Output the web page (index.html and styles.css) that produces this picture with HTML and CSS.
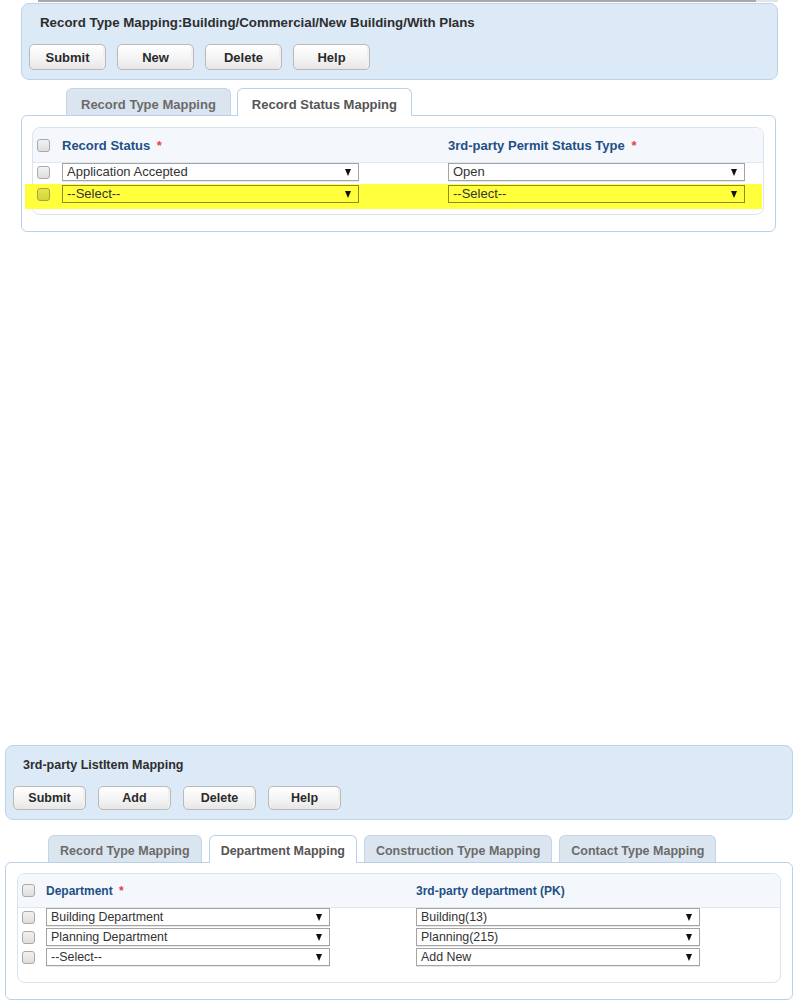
FILE: index.html
```html
<!doctype html>
<html lang="en">
  <head>
    <meta charset="UTF-8" />
    <title>Record Type Mapping</title>
    <link rel="stylesheet" href="styles.css">
  </head>
  <body>
    <!-- Record status mapping -->
    <section class="shot shot-top">
      <div class="rule"></div>
      <div class="toolbar">
        <div class="toolbar-title">Record Type Mapping:Building/Commercial/New Building/With Plans</div>
        <div class="toolbar-buttons">
          <button class="btn">Submit</button>
          <button class="btn">New</button>
          <button class="btn">Delete</button>
          <button class="btn">Help</button>
        </div>
      </div>

      <div class="tabs">
        <span class="tab">Record Type Mapping</span>
        <span class="tab active">Record Status Mapping</span>
      </div>
      <div class="tab-body">
        <div class="grid-table">
          <div class="grid-head">
            <span class="check"></span>
            <span class="col-title">Record Status <em>*</em></span>
            <span class="col-title">3rd-party Permit Status Type <em>*</em></span>
          </div>
          <div class="grid-row">
            <span class="check"></span>
            <div class="select">Application Accepted</div>
            <div class="select">Open</div>
          </div>
          <div class="grid-row highlight">
            <span class="check"></span>
            <div class="select">--Select--</div>
            <div class="select">--Select--</div>
          </div>
        </div>
      </div>
    </section>

    <!-- ListItem mapping -->
    <section class="shot shot-bottom">
      <div class="toolbar">
        <div class="toolbar-title">3rd-party ListItem Mapping</div>
        <div class="toolbar-buttons">
          <button class="btn">Submit</button>
          <button class="btn">Add</button>
          <button class="btn">Delete</button>
          <button class="btn">Help</button>
        </div>
      </div>

      <div class="tabs">
        <span class="tab">Record Type Mapping</span>
        <span class="tab active">Department Mapping</span>
        <span class="tab">Construction Type Mapping</span>
        <span class="tab">Contact Type Mapping</span>
      </div>
      <div class="tab-body">
        <div class="grid-table">
          <div class="grid-head">
            <span class="check"></span>
            <span class="col-title">Department <em>*</em></span>
            <span class="col-title">3rd-party department (PK)</span>
          </div>
          <div class="grid-row">
            <span class="check"></span>
            <div class="select">Building Department</div>
            <div class="select">Building(13)</div>
          </div>
          <div class="grid-row">
            <span class="check"></span>
            <div class="select">Planning Department</div>
            <div class="select">Planning(215)</div>
          </div>
          <div class="grid-row">
            <span class="check"></span>
            <div class="select">--Select--</div>
            <div class="select">Add New</div>
          </div>
        </div>
      </div>
    </section>
  </body>
</html>
```

FILE: styles.css
```css
body {
  margin: 0;
  width: 799px;
  font-family: 'Liberation Sans', Arial, sans-serif;
  font-size: 13px;
  color: #333;
  background: #fff;
}

.shot {
  box-sizing: border-box;
}

.rule {
  margin-left: 38px;
  width: 740px;
  height: 2px;
  background: linear-gradient(90deg, #a8a8a8 0%, #a8a8a8 97%, #e4e4e4 97%);
}

/* Toolbar panel */
.toolbar {
  box-sizing: border-box;
  background: #dce9f6;
  border: 1px solid #bdd3ea;
  border-radius: 8px;
}

.toolbar-title {
  font-weight: bold;
  color: #2e2e2e;
}

.toolbar-buttons {
  display: flex;
}

.btn {
  box-sizing: border-box;
  font-family: inherit;
  font-weight: bold;
  color: #2a2a2a;
  background: linear-gradient(180deg, #ffffff 0%, #f4f4f4 55%, #e6e6e6 100%);
  border: 1px solid #b9b9b9;
  border-radius: 5px;
  padding: 0;
  box-shadow: inset -2px 0 0 #f0f0f0;
}

/* Tabs */
.tabs {
  display: flex;
  margin-bottom: -1px;
}

.tab {
  box-sizing: border-box;
  height: 27px;
  line-height: 22px;
  font-weight: bold;
  color: #6b6b6b;
  background: #dbe5ef;
  border: 1px solid #c4d5e7;
  border-bottom: none;
  border-radius: 6px 6px 0 0;
}

.tab.active {
  position: relative;
  z-index: 1;
  height: 28px;
  color: #555;
  background: #fff;
  border-color: #b9d1ea;
}

.tab-body {
  box-sizing: border-box;
  border: 1px solid #b9d1ea;
  border-radius: 6px;
  background: #fff;
}

/* Grid */
.grid-table {
  border: 1px solid #d7e5f2;
  border-radius: 8px;
}

.grid-head,
.grid-row {
  display: grid;
  align-items: start;
  justify-items: start;
}

.grid-head {
  align-items: center;
  background: #f4f8fc;
  border-bottom: 1px solid #dfe8f1;
  border-radius: 8px 8px 0 0;
}

.col-title {
  font-weight: bold;
  color: #224f86;
}

.col-title em {
  font-style: normal;
  color: #e2434d;
  margin-left: 3px;
}

.check {
  box-sizing: border-box;
  display: block;
  width: 13px;
  height: 13px;
  margin-left: 4px;
  border: 1px solid #a9a9a9;
  border-radius: 3px;
  background: linear-gradient(180deg, #f2f2f2 0%, #dedede 100%);
}

.grid-row .check {
  margin-top: 3px;
}

.select {
  position: relative;
  box-sizing: border-box;
  height: 18px;
  line-height: 16px;
  padding-left: 4px;
  border: 1px solid #a4a4a4;
  background: #fff;
  color: #333;
  box-shadow: 0 1px 0 #e8e8e8;
}

.select:after {
  content: '';
  position: absolute;
  right: 7px;
  top: 5px;
  border-left: 3px solid transparent;
  border-right: 3px solid transparent;
  border-top: 7px solid #111;
}

.grid-row.highlight {
  background: #ffff3c;
  margin: 0 1px 0 -8px;
  padding: 1px 0 6px 8px;
}

.grid-row.highlight .select {
  background: #ffff3c;
  border-color: #8b8b2a;
  box-shadow: none;
}

.grid-row.highlight .check {
  border-color: #a3a34a;
  background: linear-gradient(180deg, #e6e64a 0%, #d4d43c 100%);
}

/* Top screenshot */
.shot-top .toolbar {
  margin: 1px 0 0 21px;
  width: 757px;
  height: 77px;
  padding: 10px 7px 0;
}

.shot-top .toolbar-title {
  padding-left: 11px;
  line-height: 18px;
  font-size: 13.3px;
}

.shot-top .toolbar-buttons {
  margin-top: 12px;
  gap: 11px;
}

.shot-top .btn {
  width: 77px;
  height: 26px;
  font-size: 13px;
}

.shot-top .tabs {
  margin: 8px 0 -1px 66px;
  gap: 6px;
}

.shot-top .tab {
  padding: 5px 14px 0;
  font-size: 13px;
}

.shot-top .tab-body {
  margin-left: 21px;
  width: 755px;
  padding: 11px 11px 16px 10px;
}

.shot-top .grid-head,
.shot-top .grid-row {
  grid-template-columns: 29px 386px 297px;
}

.shot-top .select {
  width: 297px;
}

.shot-top .grid-head {
  height: 34px;
}

.shot-top .grid-row {
  height: 21px;
}

.shot-top .grid-row.highlight {
  height: 25px;
  box-sizing: border-box;
}

.shot-top .grid-table {
  padding-bottom: 5px;
}

/* Bottom screenshot */
.shot-bottom {
  margin-top: 513px;
  font-size: 12px;
}

.shot-bottom .toolbar {
  margin-left: 5px;
  width: 788px;
  height: 75px;
  padding: 11px 7px 0;
}

.shot-bottom .toolbar-title {
  padding-left: 10px;
  line-height: 16px;
  font-size: 12.5px;
}

.shot-bottom .toolbar-buttons {
  margin-top: 13px;
  gap: 12px;
}

.shot-bottom .btn {
  width: 73px;
  height: 24px;
  font-size: 12.5px;
}

.shot-bottom .tabs {
  margin: 15px 0 -1px 48px;
  gap: 7px;
}

.shot-bottom .tab {
  padding: 4px 11px 0;
  font-size: 12.5px;
}

.shot-bottom .tab-body {
  margin-left: 5px;
  width: 788px;
  padding: 10px 11px 16px 11px;
}

.shot-bottom .grid-head,
.shot-bottom .grid-row {
  grid-template-columns: 28px 370px 284px;
}

.shot-bottom .select {
  width: 284px;
  font-size: 12.4px;
}

.shot-bottom .grid-head {
  height: 33px;
}

.shot-bottom .grid-row {
  height: 20px;
}

.shot-bottom .grid-table {
  padding-bottom: 14px;
}

.shot-bottom .check {
  margin-left: 4px;
}
```
